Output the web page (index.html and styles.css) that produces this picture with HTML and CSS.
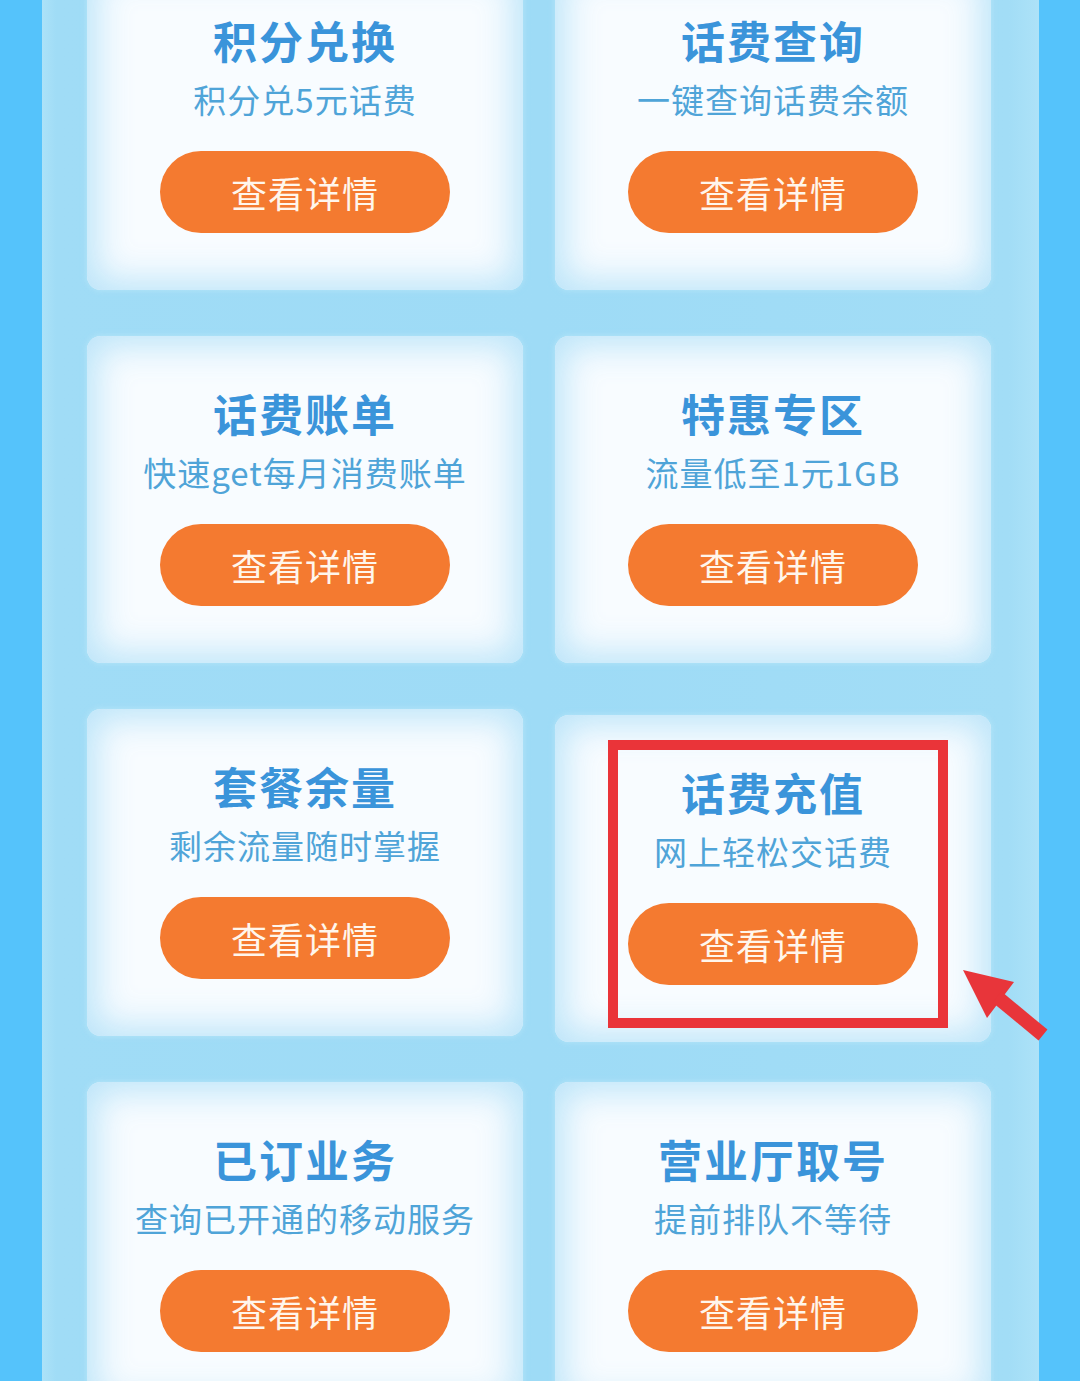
FILE: index.html
```html
<!DOCTYPE html>
<html lang="zh-CN">
<head>
<meta charset="utf-8">
<title>服务</title>
<link rel="stylesheet" href="styles.css">
</head>
<body>
<div class="page">
  <div class="grid">
    <div class="card">
      <div class="title">积分兑换</div>
      <div class="sub">积分兑5元话费</div>
      <div class="btn">查看详情</div>
    </div>
    <div class="card">
      <div class="title">话费查询</div>
      <div class="sub">一键查询话费余额</div>
      <div class="btn">查看详情</div>
    </div>
    <div class="card">
      <div class="title">话费账单</div>
      <div class="sub">快速get每月消费账单</div>
      <div class="btn">查看详情</div>
    </div>
    <div class="card">
      <div class="title">特惠专区</div>
      <div class="sub">流量低至1元1GB</div>
      <div class="btn">查看详情</div>
    </div>
    <div class="card">
      <div class="title">套餐余量</div>
      <div class="sub">剩余流量随时掌握</div>
      <div class="btn">查看详情</div>
    </div>
    <div class="card card-shift">
      <div class="title">话费充值</div>
      <div class="sub">网上轻松交话费</div>
      <div class="btn">查看详情</div>
      <div class="highlight"></div>
      <svg class="arrow" width="95" height="85" viewBox="0 0 95 85">
        <polygon points="8,10 59,22 32,58" fill="#e8353a"/>
        <line x1="42" y1="37" x2="88" y2="75" stroke="#e8353a" stroke-width="14"/>
      </svg>
    </div>
    <div class="card">
      <div class="title">已订业务</div>
      <div class="sub">查询已开通的移动服务</div>
      <div class="btn">查看详情</div>
    </div>
    <div class="card">
      <div class="title">营业厅取号</div>
      <div class="sub">提前排队不等待</div>
      <div class="btn">查看详情</div>
    </div>
  </div>
</div>
</body>
</html>
```

FILE: styles.css
```css
html, body {
  margin: 0;
  padding: 0;
}
body {
  background: #55c3fb;
  font-family: "Noto Sans CJK SC", "Noto Sans", sans-serif;
  overflow: hidden;
  height: 1381px;
}
.page {
  display: flow-root;
  margin: 0 41px 0 42px;
  height: 1381px;
  background: linear-gradient(90deg, #ace2f8 0px, #a0dcf6 14px, #9edbf6 50%, #a2ddf6 97%, #ade2f8 100%);
}
.grid {
  display: grid;
  grid-template-columns: 436px 436px;
  grid-auto-rows: 327px;
  column-gap: 32px;
  row-gap: 46px;
  margin-top: -37px;
  padding-left: 45px;
}
.card {
  position: relative;
  border-radius: 14px;
  background: #f8fcff;
  box-shadow: inset 0 0 34px 10px rgba(178, 224, 248, 0.85), 0 0 6px rgba(200, 236, 252, 0.6);
  display: flex;
  flex-direction: column;
  align-items: center;
  padding-top: 51px;
  box-sizing: border-box;
}
.card-shift {
  margin-top: 6px;
  margin-bottom: -6px;
}
.title {
  font-size: 44px;
  font-weight: 700;
  line-height: 52px;
  color: #3a94da;
  letter-spacing: 2px;
}
.sub {
  margin-top: 13px;
  font-size: 33px;
  line-height: 40px;
  color: #4fa4d8;
  letter-spacing: 1px;
}
.btn {
  margin-top: 32px;
  width: 290px;
  height: 82px;
  border-radius: 41px;
  background: #f47a30;
  color: #fff6ec;
  font-size: 36px;
  line-height: 82px;
  text-align: center;
  letter-spacing: 1px;
}
.highlight {
  position: absolute;
  left: 53px;
  top: 25px;
  width: 340px;
  height: 288px;
  border: 10px solid #ea3439;
  box-sizing: border-box;
}
.arrow {
  position: absolute;
  left: 400px;
  top: 245px;
}
```
